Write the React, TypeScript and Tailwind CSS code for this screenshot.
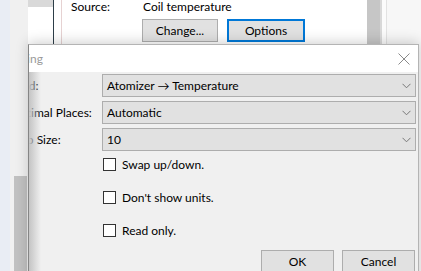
import React from "react";

const font = { fontFamily: '"Segoe UI", Lato, "Noto Sans", sans-serif' };

const Chevron = () => (
  <svg width="9" height="6" viewBox="0 0 9 6" className="shrink-0">
    <polyline points="0.5,0.8 4.5,4.8 8.5,0.8" fill="none" stroke="#777" strokeWidth="1" />
  </svg>
);

const Combo = ({ value }: { value: string }) => (
  <div className="h-[23px] flex items-center justify-between pl-[4px] pr-[4px] bg-[#e1e1e1] border border-[#adadad] text-[12px] text-black">
    <span>{value}</span>
    <Chevron />
  </div>
);

const Check = ({ label }: { label: string }) => (
  <div className="h-[13px] flex items-center pl-[1px]">
    <div className="w-[13px] h-[13px] bg-white border border-[#333333]" />
    <span className="ml-[6px] text-[12px] leading-[16px] text-black">{label}</span>
  </div>
);

const WinButton = ({ label, focused }: { label: string; focused?: boolean }) => (
  <div
    className={
      focused
        ? "w-[78px] h-[23px] flex items-center justify-center bg-[#e1e1e1] border-2 border-[#0078d7] text-[12px] text-black"
        : "w-[76px] h-[23px] flex items-center justify-center bg-[#e1e1e1] border border-[#adadad] text-[12px] text-black"
    }
  >
    {label}
  </div>
);

export default function App() {
  return (
    <div className="relative w-[421px] h-[271px] overflow-hidden bg-white" style={font}>
      {/* window behind */}
      <div className="flex h-full">
        <div className="w-[10px] bg-[#e9edf4]" />
        <div className="w-[18px] flex flex-col bg-[#f0f0f0] pt-[176px] pl-[4px] pr-[1px]">
          <div className="flex-1 bg-[#c1c1c1]" />
        </div>
        <div className="w-[26px] bg-white border-r border-[#2d3e48]">
          <div className="h-[7px] bg-[#d9d9d9]" />
        </div>
        <div className="w-[8px] bg-white border-r border-[#e6d2d2]" />
        <div className="w-[305px] bg-white pl-[9px]">
          <div className="flex leading-[14px] text-[12px] text-black">
            <span className="w-[72px]">Source:</span>
            <span>Coil temperature</span>
          </div>
          <div className="flex gap-[9px] ml-[71px] mt-[5px]">
            <WinButton label="Change..." />
            <WinButton label="Options" focused />
          </div>
        </div>
        <div className="w-[15px] bg-[#c6c6c6] border-r-2 border-[#d8d8d8]" />
        <div className="w-[5px] bg-[#fbfbfb] border-r border-[#e2e2e2]" />
        <div className="flex-1 bg-[#f7f7f7]" />
      </div>

      {/* dialog */}
      <div className="absolute left-[28px] top-[44px] w-[391px] h-[240px] flex flex-col border border-[#b4b4b4] border-l-[#858585] bg-[#f0f0f0] shadow-[0_-2px_12px_rgba(0,0,0,0.18)] overflow-hidden">
        <div className="h-[27px] shrink-0 flex items-center justify-between bg-white">
          <span className="-ml-[23px] text-[12px] text-[#9a9a9a]">Setting</span>
          <svg width="12" height="12" viewBox="0 0 12 12" className="mr-[8px]">
            <path d="M0.5 0.5 L11.5 11.5 M11.5 0.5 L0.5 11.5" stroke="#8a8a8a" strokeWidth="1" fill="none" />
          </svg>
        </div>
        <div className="relative flex-1 pt-[2px]">
          <div className="absolute inset-y-0 left-0 w-[12px] bg-gradient-to-r from-[#c4c4c4] to-transparent" />
          <div className="-ml-[19px]">
            <div className="grid grid-cols-[92px_314px] gap-y-[4px] text-[12px] text-black">
              <div className="flex items-center">Field:</div>
              <Combo value="Atomizer → Temperature" />
              <div className="flex items-center">Decimal Places:</div>
              <Combo value="Automatic" />
              <div className="flex items-center">Step Size:</div>
              <Combo value="10" />
              <div />
              <div className="flex flex-col gap-[20px] mt-[3px]">
                <Check label="Swap up/down." />
                <Check label="Don't show units." />
                <Check label="Read only." />
              </div>
            </div>
          </div>
          <div className="flex justify-end gap-[8px] pr-[3px] mt-[13px]">
            <div className="w-[73px] h-[23px] flex items-center justify-center bg-[#e1e1e1] border border-[#adadad] text-[12px] text-black">OK</div>
            <div className="w-[73px] h-[23px] flex items-center justify-center bg-[#e1e1e1] border border-[#adadad] text-[12px] text-black">Cancel</div>
          </div>
        </div>
      </div>
    </div>
  );
}
